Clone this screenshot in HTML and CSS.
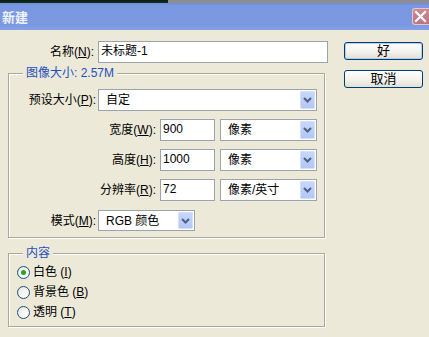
FILE: index.html
```html
<!DOCTYPE html>
<html>
<head>
<meta charset="utf-8">
<link rel="stylesheet" href="styles.css">
</head>
<body>
<div class="screen">
  <div class="topstrip"><div class="dark"></div></div>
  <div class="titlebar">
    <span class="title">新建</span>
    <span class="close"><svg width="17" height="17" viewBox="0 0 17 17"><path d="M4 4 L13 13 M13 4 L4 13" stroke="#fff" stroke-width="2.2" stroke-linecap="square"/></svg></span>
  </div>
  <div class="body">
    <div class="main">
      <div class="row name-row">
        <span class="lbl lbl-name">名称(<u>N</u>):</span>
        <div class="input input-name">未标题-1</div>
      </div>
      <div class="group group-size">
        <span class="legend">图像大小: 2.57M</span>
        <div class="row">
          <span class="lbl lbl-short">预设大小(<u>P</u>):</span>
          <div class="select select-preset"><span class="val">自定</span><span class="arrow"><svg width="9" height="6" viewBox="0 0 9 6"><path d="M1 1 L4.5 4.5 L8 1" fill="none" stroke="#4d6185" stroke-width="2"/></svg></span></div>
        </div>
        <div class="row">
          <span class="lbl lbl-long">宽度(<u>W</u>):</span>
          <div class="input input-num">900</div>
          <div class="select select-unit"><span class="val">像素</span><span class="arrow"><svg width="9" height="6" viewBox="0 0 9 6"><path d="M1 1 L4.5 4.5 L8 1" fill="none" stroke="#4d6185" stroke-width="2"/></svg></span></div>
        </div>
        <div class="row">
          <span class="lbl lbl-long">高度(<u>H</u>):</span>
          <div class="input input-num">1000</div>
          <div class="select select-unit"><span class="val">像素</span><span class="arrow"><svg width="9" height="6" viewBox="0 0 9 6"><path d="M1 1 L4.5 4.5 L8 1" fill="none" stroke="#4d6185" stroke-width="2"/></svg></span></div>
        </div>
        <div class="row">
          <span class="lbl lbl-long">分辨率(<u>R</u>):</span>
          <div class="input input-num">72</div>
          <div class="select select-unit"><span class="val">像素/英寸</span><span class="arrow"><svg width="9" height="6" viewBox="0 0 9 6"><path d="M1 1 L4.5 4.5 L8 1" fill="none" stroke="#4d6185" stroke-width="2"/></svg></span></div>
        </div>
        <div class="row row-mode">
          <span class="lbl lbl-short">模式(<u>M</u>):</span>
          <div class="select select-mode"><span class="val">RGB 颜色</span><span class="arrow"><svg width="9" height="6" viewBox="0 0 9 6"><path d="M1 1 L4.5 4.5 L8 1" fill="none" stroke="#4d6185" stroke-width="2"/></svg></span></div>
        </div>
      </div>
      <div class="group group-content">
        <span class="legend">内容</span>
        <div class="radio-row"><span class="radio checked"></span><span class="rlbl">白色 (<u>I</u>)</span></div>
        <div class="radio-row"><span class="radio"></span><span class="rlbl">背景色 (<u>B</u>)</span></div>
        <div class="radio-row"><span class="radio"></span><span class="rlbl">透明 (<u>T</u>)</span></div>
      </div>
    </div>
    <div class="buttons">
      <div class="btn btn-default">好</div>
      <div class="btn">取消</div>
    </div>
  </div>
</div>
</body>
</html>
```

FILE: styles.css
```css
* { box-sizing: border-box; }
html, body { margin: 0; padding: 0; }
body {
  background: #ece9d8;
  font-family: "Liberation Sans", "Noto Sans CJK SC", sans-serif;
  font-size: 12px;
  color: #000;
}
.screen { width: 429px; height: 337px; overflow: hidden; background: #ece9d8; }
.topstrip { height: 3px; background: #8d8d8d; }
.topstrip .dark { width: 168px; height: 3px; background: linear-gradient(#0b1d10, #15301e); }
.titlebar {
  height: 27px;
  background: linear-gradient(#6c8bdd 0, #7a98e2 3px, #7b99e1 22px, #86a2e6 27px);
  display: flex;
  align-items: flex-start;
  justify-content: space-between;
}
.title {
  color: #eef2fb;
  font-weight: bold;
  font-size: 13px;
  line-height: 15px;
  margin-top: 6px;
  margin-left: 2px;
  font-family: "Noto Sans CJK SC", sans-serif;
}
.close {
  width: 17px; height: 17px;
  margin-top: 5px;
  background: linear-gradient(#cc8a97, #bf7280);
  border: 1px solid #e8c4cc;
  border-right: none;
  border-radius: 3px 0 0 3px;
  display: flex;
}
.close svg { display: block; margin-left: -1px; margin-top: -1px; }
.body { display: flex; align-items: flex-start; }
.main { width: 328px; padding-left: 8px; }
.row { display: flex; align-items: center; height: 22px; }
.name-row { margin-top: 11px; }
.lbl { text-align: right; white-space: nowrap; line-height: 14px; }
.lbl u { text-decoration: underline; }
.lbl-name { width: 86px; margin-right: 4px; }
.lbl-short { width: 87px; margin-right: 2px; }
.lbl-long { width: 147px; margin-right: 4px; }
.input {
  height: 22px;
  border: 1px solid #9ba4ad;
  background: #fff;
  padding-left: 2px;
  line-height: 18px;
  white-space: nowrap;
}
.input-name { width: 230px; font-size: 12px; }
.input-num { width: 55px; margin-right: 5px; }
.select {
  height: 22px;
  border: 1px solid #9ba4ad;
  background: #fff;
  display: flex;
  align-items: center;
  justify-content: space-between;
  padding: 1px;
}
.select .val { padding-left: 6px; line-height: 14px; white-space: nowrap; }
.select .arrow {
  width: 15px; height: 18px;
  background: linear-gradient(#c7d7fc, #b3c7f5);
  border: 1px solid #d5e0fb;
  border-radius: 1px;
  display: flex; align-items: center; justify-content: center;
}
.select-preset { width: 219px; }
.select-unit { width: 97px; }
.select-mode { width: 97px; height: 21px; }
.select-mode .arrow { height: 17px; }
.group {
  position: relative;
  border: 1px solid #aca899;
  box-shadow: 1px 1px 0 #fff, inset 1px 1px 0 #fff;
}
.legend {
  position: absolute;
  left: 14px;
  top: -8px;
  padding: 0 3px;
  background: #ece9d8;
  color: #1f4fbf;
  line-height: 15px;
  white-space: nowrap;
}
.group-size {
  width: 317px;
  height: 165px;
  margin-top: 10px;
  padding-top: 15px;
  display: flex;
  flex-direction: column;
  gap: 8px;
}
.group-size .row-mode { margin-top: 1px; height: 21px; }
.group-content {
  width: 317px;
  height: 74px;
  margin-top: 15px;
  padding-top: 8px;
  padding-left: 8px;
}
.radio-row { display: flex; align-items: center; height: 20px; }
.radio {
  width: 13px; height: 13px;
  border-radius: 50%;
  border: 1px solid #1c5180;
  background: radial-gradient(circle at 70% 70%, #fff 0, #f0efe8 60%, #dcdad0 100%);
  margin-right: 3px;
  display: flex; align-items: center; justify-content: center;
}
.radio.checked::after {
  content: "";
  width: 5px; height: 5px;
  border-radius: 50%;
  background: #2aa12a;
}
.rlbl { line-height: 14px; white-space: nowrap; }
.buttons {
  margin-left: 16px;
  padding-top: 12px;
  display: flex;
  flex-direction: column;
  gap: 10px;
}
.btn {
  width: 79px; height: 18px;
  border: 1px solid #003c74;
  border-radius: 3px;
  background: linear-gradient(#ffffff 0, #f4f3ee 50%, #e2e0d6 100%);
  text-align: center;
  line-height: 16px;
  font-size: 13px;
}
.btn-default { box-shadow: inset 0 0 0 1px #b7cbf1; }
```
